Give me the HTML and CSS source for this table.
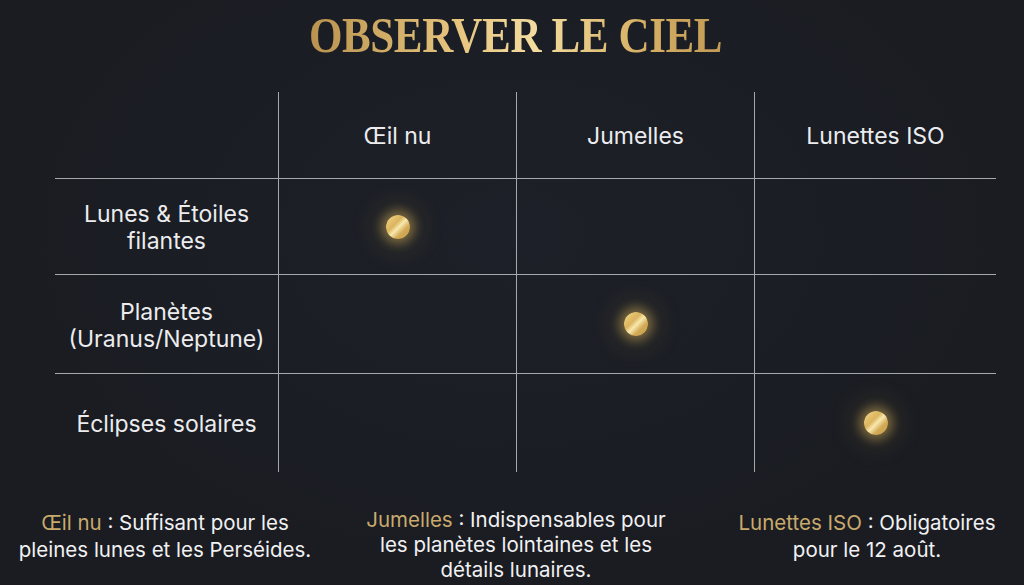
FILE: index.html
```html
<!DOCTYPE html>
<html lang="fr">
<head>
<meta charset="utf-8">
<title>Observer le ciel</title>
<link rel="stylesheet" href="styles.css">
</head>
<body>
<main class="page">
  <h1 class="title">OBSERVER LE CIEL</h1>
  <section class="matrix">
    <div class="cell corner"></div>
    <div class="cell head sep">Œil nu</div>
    <div class="cell head sep">Jumelles</div>
    <div class="cell head sep">Lunettes ISO</div>

    <div class="cell label">Lunes &amp; Étoiles<br>filantes</div>
    <div class="cell sep"><span class="dot"></span></div>
    <div class="cell sep"></div>
    <div class="cell sep"></div>

    <div class="cell label">Planètes<br>(Uranus/Neptune)</div>
    <div class="cell sep"></div>
    <div class="cell sep"><span class="dot"></span></div>
    <div class="cell sep"></div>

    <div class="cell label last">Éclipses solaires</div>
    <div class="cell sep last"></div>
    <div class="cell sep last"></div>
    <div class="cell sep last"><span class="dot"></span></div>
  </section>
  <section class="notes">
    <p class="note"><span class="gold">Œil nu</span> : Suffisant pour les<br>pleines lunes et les Perséides.</p>
    <p class="note tight"><span class="gold">Jumelles</span> : Indispensables pour<br>les planètes lointaines et les<br>détails lunaires.</p>
    <p class="note"><span class="gold">Lunettes ISO</span> : Obligatoires<br>pour le 12 août.</p>
  </section>
</main>
</body>
</html>
```
FILE: styles.css
```css
html, body {
  margin: 0;
  padding: 0;
  height: 100%;
  overflow: hidden;
}
body {
  background: #1b1e25;
  color: #ececee;
  font-family: Inter, "Noto Sans", "Liberation Sans", sans-serif;
}
.page {
  width: 1024px;
  height: 585px;
  background: radial-gradient(ellipse at 50% 40%, #1d2028 0%, #1a1c22 70%);
}
.title {
  width: fit-content;
  margin: 0 auto;
  height: 80px;
  box-sizing: border-box;
  padding-top: 10px;
  font-family: "Liberation Serif", "DejaVu Serif", serif;
  font-weight: 700;
  font-size: 51px;
  line-height: 51px;
  letter-spacing: -0.5px;
  transform: translateX(4px) scaleX(0.845);
  background: linear-gradient(90deg, #b8924e 0%, #e6c47d 35%, #f3dca0 55%, #d7b165 80%, #c19a55 100%);
  -webkit-background-clip: text;
  background-clip: text;
  color: transparent;
}
.matrix {
  display: grid;
  grid-template-columns: 223px 238px 238px 242px;
  grid-template-rows: 87px 96px 99px 98px;
  margin: 12px 0 0 55px;
  width: 941px;
}
.cell {
  display: flex;
  align-items: center;
  justify-content: center;
  text-align: center;
  font-size: 23px;
  line-height: 27px;
  border-bottom: 1px solid rgba(205, 207, 212, 0.78);
}
.cell.last {
  border-bottom: none;
}
.head, .label {
  padding-top: 3px;
}
.sep {
  border-left: 1px solid rgba(205, 207, 212, 0.78);
}
.dot {
  width: 24px;
  height: 24px;
  border-radius: 50%;
  background: linear-gradient(135deg, #f2d88c 0%, #dcb45e 38%, #f8e8ad 52%, #d2a954 70%, #c89f4d 100%);
  box-shadow: 0 0 10px 5px rgba(226, 186, 92, 0.4), 0 0 26px 12px rgba(200, 160, 70, 0.14);
}
.notes {
  display: grid;
  grid-template-columns: repeat(3, 320px);
  column-gap: 31px;
  justify-content: center;
  margin: 37px 0 0 8px;
}
.note {
  margin: 0;
  text-align: center;
  white-space: nowrap;
  font-size: 20.5px;
  line-height: 27px;
  color: #f1f1f3;
}
.note.tight {
  margin-top: -2px;
  line-height: 25px;
}
.gold {
  color: #c9aa6c;
}
```
